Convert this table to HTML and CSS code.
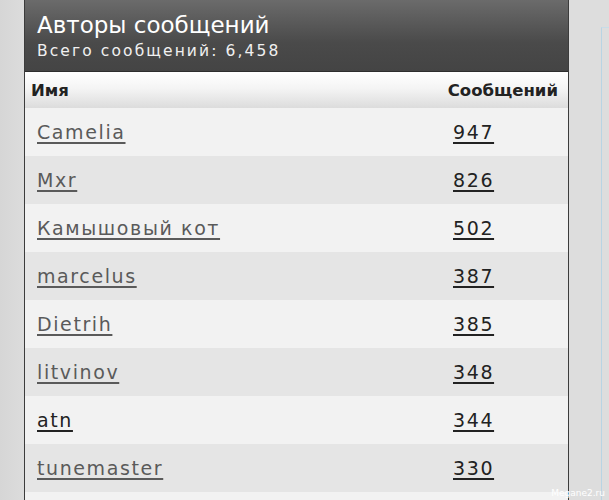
FILE: index.html
```html
<!DOCTYPE html>
<html lang="ru">
<head>
<meta charset="utf-8">
<title>Авторы сообщений</title>
<link rel="stylesheet" href="styles.css">
</head>
<body>
<div class="page">
  <div class="gutter-left"></div>
  <div class="panel">
    <div class="panel-head">
      <h1 class="title">Авторы сообщений</h1>
      <div class="subtitle">Всего сообщений: 6,458</div>
    </div>
    <div class="table">
      <div class="th th-name">Имя</div>
      <div class="th th-count">Сообщений</div>

      <div class="row light"><a class="name" href="#">Camelia</a><a class="count" href="#">947</a></div>
      <div class="row dark"><a class="name" href="#">Mxr</a><a class="count" href="#">826</a></div>
      <div class="row light"><a class="name" href="#">Камышовый кот</a><a class="count" href="#">502</a></div>
      <div class="row dark"><a class="name" href="#">marcelus</a><a class="count" href="#">387</a></div>
      <div class="row light"><a class="name" href="#">Dietrih</a><a class="count" href="#">385</a></div>
      <div class="row dark"><a class="name" href="#">litvinov</a><a class="count" href="#">348</a></div>
      <div class="row light"><a class="name visited" href="#">atn</a><a class="count" href="#">344</a></div>
      <div class="row dark"><a class="name" href="#">tunemaster</a><a class="count" href="#">330</a></div>
      <div class="row light"><a class="name" href="#">&nbsp;</a><a class="count" href="#">&nbsp;</a></div>
    </div>
  </div>
  <div class="gutter-right">
    <div class="side-box"></div>
    <div class="watermark">Megane2.ru</div>
  </div>
</div>
</body>
</html>
```
FILE: styles.css
```css
html, body {
  margin: 0;
  padding: 0;
  height: 100%;
  overflow: hidden;
}
body {
  background: #d9d9d9;
  font-family: "DejaVu Sans", Verdana, sans-serif;
}
.page {
  display: flex;
  height: 500px;
}
.gutter-left {
  width: 24px;
  flex: none;
  background: linear-gradient(to right, #d6d6d6, #dcdcdc);
}
.panel {
  width: 543px;
  flex: none;
  border-left: 1px solid #3c3c3c;
  border-right: 1px solid #3c3c3c;
  background: #f2f2f2;
  overflow: hidden;
}
.panel-head {
  height: 72px;
  box-sizing: border-box;
  padding: 11px 0 0 12px;
  background: linear-gradient(to bottom, #6b6b6b, #4a4a4a 60%, #444444);
  color: #ffffff;
  border-bottom: 1px solid #2e2e2e;
}
.title {
  margin: 0;
  font-size: 23px;
  font-weight: normal;
  line-height: 28px;
}
.subtitle {
  margin-top: 2px;
  font-size: 15.5px;
  line-height: 20px;
  letter-spacing: 2.1px;
  color: #f0f0f0;
}
.table {
  display: grid;
  grid-template-columns: 1fr 119px;
}
.th {
  height: 36px;
  display: flex;
  align-items: center;
  font-weight: bold;
  font-size: 16.5px;
  color: #222222;
  background: linear-gradient(to bottom, #ffffff, #f4f4f4 45%, #dcdcdc);
  border-top: 1px solid #ffffff;
  box-sizing: border-box;
}
.th-name {
  padding-left: 6px;
}
.th-count {
  justify-content: flex-end;
  padding-right: 10px;
}
.row {
  display: contents;
}
.row > a {
  height: 48px;
  display: flex;
  align-items: center;
  font-size: 19px;
  letter-spacing: 1.6px;
  text-underline-offset: 3px;
  text-decoration-thickness: 2px;
}
.row.light > a { background: #f2f2f2; }
.row.dark > a { background: #e5e5e5; }
.name {
  padding-left: 12px;
  color: #5a5a5a;
}
.name.visited {
  color: #222222;
}
.count {
  padding-left: 4px;
  color: #222222;
}
.gutter-right {
  flex: 1;
  display: flex;
  flex-direction: column;
  position: relative;
  background: #dddddd;
}
.side-box {
  margin: 27px 0 0 32px;
  flex: 1;
  border-left: 1px solid #b8d4e4;
  border-top: 1px solid #c8dce8;
}
.watermark {
  position: absolute;
  right: 4px;
  bottom: 2px;
  font-family: "DejaVu Sans", sans-serif;
  font-size: 9px;
  color: #ffffff;
  white-space: nowrap;
}
```
